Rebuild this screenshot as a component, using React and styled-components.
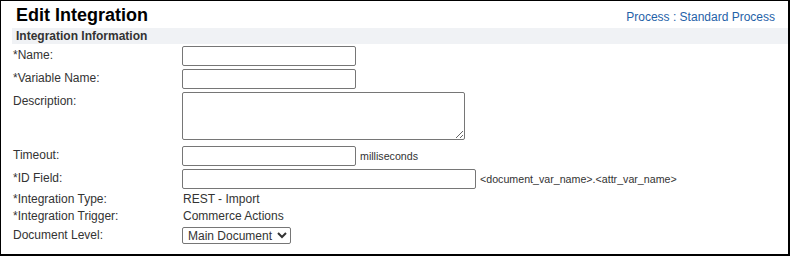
import React from "react";
import styled, { createGlobalStyle } from "styled-components";

const GlobalStyle = createGlobalStyle`
  body {
    margin: 0;
    background: #fff;
    font-family: "Liberation Sans", Arial, sans-serif;
  }
`;

export default function App() {
  return (
    <>
      <GlobalStyle />
      <Panel>
        <Header>
          <Title>Edit Integration</Title>
          <ProcessLink href="#">Process : Standard Process</ProcessLink>
        </Header>
        <Body>
          <SectionBar>Integration Information</SectionBar>
          <FormGrid>
            <Label>*Name:</Label>
            <Field>
              <TextInput type="text" $width={174} />
            </Field>

            <Label>*Variable Name:</Label>
            <Field>
              <TextInput type="text" $width={174} />
            </Field>

            <Label>Description:</Label>
            <Field $extra={3}>
              <TextArea />
            </Field>

            <Label>Timeout:</Label>
            <Field>
              <TextInput type="text" $width={174} />
              <Hint>milliseconds</Hint>
            </Field>

            <Label>*ID Field:</Label>
            <Field>
              <TextInput type="text" $width={294} />
              <Hint>&lt;document_var_name&gt;.&lt;attr_var_name&gt;</Hint>
            </Field>

            <Label $top={0}>*Integration Type:</Label>
            <Value>REST - Import</Value>

            <Label $top={0}>*Integration Trigger:</Label>
            <Value>Commerce Actions</Value>

            <Label>Document Level:</Label>
            <Field>
              <Select defaultValue="main">
                <option value="main">Main Document</option>
                <option value="sub">Sub Document</option>
              </Select>
            </Field>
          </FormGrid>
        </Body>
      </Panel>
    </>
  );
}

const Panel = styled.div`
  width: 790px;
  height: 256px;
  box-sizing: border-box;
  border-top: 1px solid #000;
  border-left: 1px solid #000;
  border-right: 2px solid #000;
  border-bottom: 2px solid #000;
  background: #fff;
  overflow: hidden;
`;

const Header = styled.div`
  height: 27px;
  box-sizing: border-box;
  padding: 4px 13px 0 15px;
  display: flex;
  align-items: baseline;
  justify-content: space-between;
`;

const Title = styled.h1`
  margin: 0;
  font-size: 18px;
  line-height: 20px;
  font-weight: bold;
  color: #000;
`;

const ProcessLink = styled.a`
  font-size: 12px;
  line-height: 14px;
  color: #1f62a8;
  text-decoration: none;
`;

const Body = styled.div`
  padding-left: 11px;
`;

const SectionBar = styled.div`
  height: 16px;
  line-height: 16px;
  padding-left: 4px;
  margin-bottom: 2px;
  background: #f0f2f5;
  color: #333;
  font-size: 12px;
  font-weight: bold;
`;

const FormGrid = styled.div`
  display: grid;
  grid-template-columns: 170px 1fr;
  row-gap: 3px;
  align-items: start;
`;

const Label = styled.div`
  padding-left: 1px;
  padding-top: ${(p) => p.$top ?? 2}px;
  font-size: 12px;
  line-height: 14px;
  color: #333;
`;

const Field = styled.div`
  display: flex;
  align-items: center;
  gap: 4px;
  margin-bottom: ${(p) => p.$extra ?? 0}px;
`;

const TextInput = styled.input`
  width: ${(p) => p.$width}px;
  height: 20px;
  box-sizing: border-box;
  margin: 0;
  padding: 1px 3px;
  border: 1px solid #767676;
  border-radius: 2px;
  font-family: "Liberation Sans", Arial, sans-serif;
  font-size: 12px;
`;

const TextArea = styled.textarea`
  width: 283px;
  height: 48px;
  box-sizing: border-box;
  margin: 0;
  padding: 2px;
  border: 1px solid #767676;
  border-radius: 2px;
  font-family: "Liberation Sans", Arial, sans-serif;
  font-size: 12px;
`;

const Hint = styled.span`
  font-size: 8pt;
  color: #333;
`;

const Value = styled.div`
  padding-left: 1px;
  font-size: 12px;
  line-height: 14px;
  color: #333;
`;

const Select = styled.select`
  width: 109px;
  height: 17px;
  box-sizing: border-box;
  margin: 1px 0 0;
  padding: 0 0 0 1px;
  border: 1px solid #767676;
  border-radius: 2px;
  background: #fff;
  color: #333;
  font-family: "Liberation Sans", Arial, sans-serif;
  font-size: 12px;
`;
